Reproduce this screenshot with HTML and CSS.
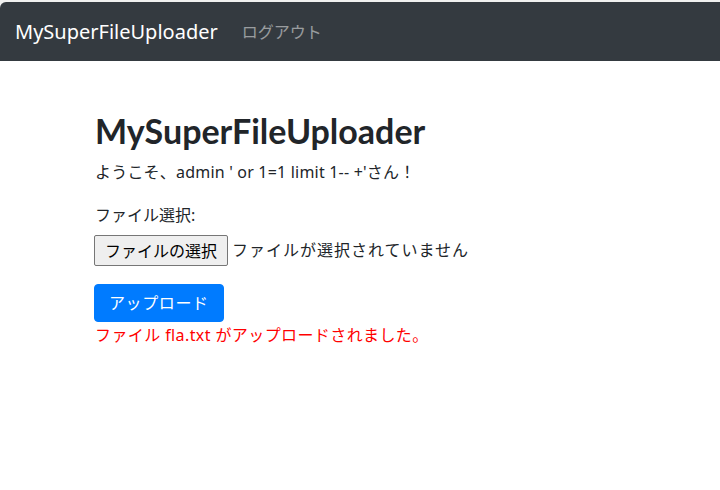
FILE: index.html
```html
<!DOCTYPE html>
<html lang="ja">
<head>
    <meta charset="UTF-8">
    <meta name="viewport" content="width=device-width, initial-scale=1.0">
    <title>MySuperFileUploader</title>
    <link rel="stylesheet" href="styles.css">
</head>
<body>
    <nav class="navbar">
        <a class="navbar-brand" href="#">MySuperFileUploader</a>
        <a class="nav-link" href="#">ログアウト</a>
    </nav>
    <div class="container">
        <h1>MySuperFileUploader</h1>
        <p class="welcome">ようこそ、admin ' or 1=1 limit 1-- +'さん！</p>
        <form>
            <div class="form-group">
                <label class="file-label">ファイル選択:</label>
                <div class="file-input">
                    <span class="file-btn">ファイルの選択</span>
                    <span class="file-name">ファイルが選択されていません</span>
                </div>
            </div>
            <button type="button" class="btn-primary">アップロード</button>
        </form>
        <p class="message">ファイル fla.txt がアップロードされました。</p>
    </div>
</body>
</html>
```

FILE: styles.css
```css
html { background: #f0f0f0; }
body { margin: 0; padding-top: 2px; font-family: "Noto Sans", "Noto Sans CJK JP", sans-serif; font-size: 16px; line-height: 1.5; color: #212529; }
.navbar { display: flex; align-items: center; height: 59px; padding: 0 15px; background-color: #343a40; border-top-left-radius: 6px; }
.navbar-brand { font-size: 20px; color: #fff; text-decoration: none; margin-right: 24px; }
.nav-link { color: rgba(255, 255, 255, 0.5); text-decoration: none; }
.container { background: #fff; min-height: 429px; padding: 50px 95px 0; box-sizing: border-box; }
h1 { margin: 0 0 8px; font-family: Lato, "Noto Sans", sans-serif; font-size: 34px; font-weight: 700; line-height: 1.2; }
.welcome { margin: 0 0 19px; letter-spacing: 0.2px; }
.form-group { margin-bottom: 18px; }
.file-label { display: block; margin-bottom: 8px; }
.file-input { display: flex; align-items: center; margin-left: -1px; }
.file-btn { display: inline-block; padding: 3px 10px 2px; border: 1px solid #767676; border-radius: 2px; background: #efefef; color: #000; margin-right: 4px; }
.file-name { letter-spacing: 1px; }
.btn-primary { display: block; height: 38px; margin-left: -1px; padding: 0 14px; font-family: inherit; font-size: 16px; line-height: 1.5; letter-spacing: 0.6px; color: #fff; background-color: #007bff; border: 1px solid #007bff; border-radius: 4px; }
.message { margin: 1px 0 0; color: red; letter-spacing: 0.4px; }
```
